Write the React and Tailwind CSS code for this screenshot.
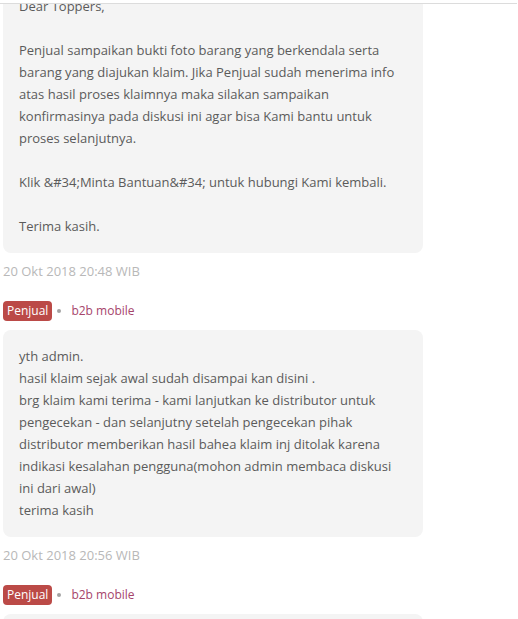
const FONT = { fontFamily: '"Open Sans", "Liberation Sans", sans-serif' };

const messages = [
  {
    text:
      'Dear Toppers,\n\nPenjual sampaikan bukti foto barang yang berkendala serta barang yang diajukan klaim. Jika Penjual sudah menerima info atas hasil proses klaimnya maka silakan sampaikan konfirmasinya pada diskusi ini agar bisa Kami bantu untuk proses selanjutnya.\n\nKlik &#34;Minta Bantuan&#34; untuk hubungi Kami kembali.\n\nTerima kasih.',
    time: '20 Okt 2018 20:48 WIB',
  },
  {
    text:
      'yth admin.\nhasil klaim sejak awal sudah disampai kan disini .\nbrg klaim kami terima - kami lanjutkan ke distributor untuk pengecekan - dan selanjutny setelah pengecekan pihak distributor memberikan hasil bahea klaim inj ditolak karena indikasi kesalahan pengguna(mohon admin membaca diskusi ini dari awal)\nterima kasih',
    time: '20 Okt 2018 20:56 WIB',
  },
];

function Bubble({ children }) {
  return (
    <div className="w-[420px] rounded-lg bg-[#f4f4f4] pl-4 pr-6 pt-[15px] pb-4 text-[13px] leading-[22px] text-[#5b5b5b] whitespace-pre-line">
      {children}
    </div>
  );
}

function Author() {
  return (
    <div className="flex h-5 items-center">
      <span className="inline-flex h-5 items-center rounded-sm bg-[#bb4a47] px-1 text-[12px] text-white">
        Penjual
      </span>
      <span className="ml-[5px] h-1 w-1 rounded-full bg-[#a3a3a3]" />
      <span className="ml-[10px] text-[12px] text-[#a6456b]">b2b mobile</span>
    </div>
  );
}

export default function App() {
  return (
    <div className="relative h-[619px] w-[518px] overflow-hidden bg-white" style={FONT}>
      {/* header strip overlapping the scrolled thread */}
      <div className="absolute left-0 top-0 z-10 h-[4px] w-[517px] border-b border-[#dcdcdc] bg-white" />

      <div className="-mt-[20px] flex flex-col pl-[3px]">
        {messages.map((m, i) => (
          <div key={i} className="flex flex-col">
            <Bubble>{m.text}</Bubble>
            <p className="mt-2 text-[13px] leading-5 text-[#b8b8b8]">{m.time}</p>
            <div className="mt-5 mb-[9px]">
              <Author />
            </div>
          </div>
        ))}
        <Bubble>{' '}</Bubble>
      </div>
    </div>
  );
}
